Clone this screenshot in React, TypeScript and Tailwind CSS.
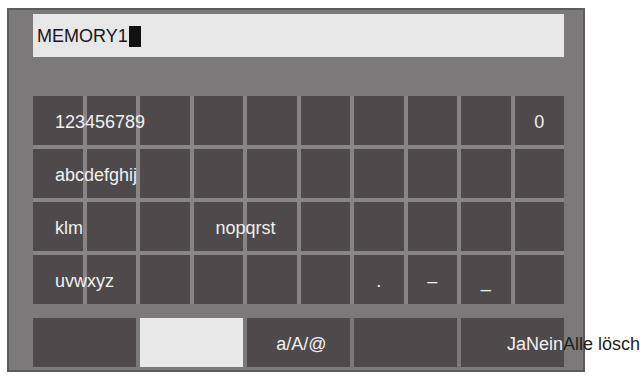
import React from "react";

type Cell = { label?: string; center?: boolean };

const rows: Cell[][] = [
  [{ label: "123456789" }, {}, {}, {}, {}, {}, {}, {}, {}, { label: "0", center: true }],
  [{ label: "abcdefghij" }, {}, {}, {}, {}, {}, {}, {}, {}, {}],
  [{ label: "klm" }, {}, {}, { label: "nopqrst" }, {}, {}, {}, {}, {}, {}],
  [
    { label: "uvwxyz" },
    {},
    {},
    {},
    {},
    {},
    { label: ".", center: true },
    { label: "–", center: true },
    { label: "_", center: true },
    {},
  ],
];

function Key({ cell }: { cell: Cell }) {
  return (
    <div
      className={
        cell.center
          ? "h-[49px] bg-[#4e4a4b] flex items-center justify-center pt-[3px]"
          : "h-[49px] bg-[#4e4a4b] flex items-center pt-[3px]"
      }
    >
      {cell.label ? (
        <span
          className={
            cell.center
              ? "relative z-10 whitespace-nowrap text-[18px] leading-none text-[#f0f0f0]"
              : "relative z-10 whitespace-nowrap text-[18px] leading-none text-[#f0f0f0] pl-[22px]"
          }
        >
          {cell.label}
        </span>
      ) : null}
    </div>
  );
}

export default function App() {
  return (
    <div
      className="w-[643px] h-[376px] overflow-hidden bg-white"
      style={{ fontFamily: '"Liberation Sans", Arial, sans-serif' }}
    >
      <div className="ml-[7px] mt-[8px] w-[578px] h-[364px] bg-[#7b797a] border-2 border-[#5d5b5c] pl-[24px] pr-[19px] pt-[4px] pb-[3px] flex flex-col">
        <div className="h-[43px] bg-[#e7e7e7] flex items-center pl-[4px] pt-[1px]">
          <span className="text-[18px] leading-none text-[#161616] whitespace-nowrap">MEMORY1</span>
          <span className="ml-[1px] w-[12px] h-[21px] bg-[#111111]" />
        </div>

        <div className="mt-[39px] grid grid-cols-10 gap-[4px] bg-[#878586]">
          {rows.map((row, ri) =>
            row.map((cell, ci) => <Key key={`${ri}-${ci}`} cell={cell} />)
          )}
        </div>

        <div className="mt-[14px] grid grid-cols-10 gap-[4px]">
          <div className="col-span-2 h-[49px] bg-[#4e4a4b]" />
          <div className="col-span-2 h-[49px] bg-[#e9e9e9]" />
          <div className="col-span-2 h-[49px] bg-[#4e4a4b] flex items-center justify-center pt-[2px] pl-[6px]">
            <span className="text-[18px] leading-none text-[#f0f0f0] whitespace-nowrap">a/A/@</span>
          </div>
          <div className="col-span-2 h-[49px] bg-[#4e4a4b]" />
          <div className="col-span-2 h-[49px] bg-[#4e4a4b] flex items-center pt-[2px]">
            <span className="relative z-10 pl-[46px] text-[18px] leading-none whitespace-nowrap">
              <span className="text-[#f0f0f0]">JaNein</span>
              <span className="text-[#1e1e1e]">Alle lösch</span>
            </span>
          </div>
        </div>
      </div>
    </div>
  );
}
